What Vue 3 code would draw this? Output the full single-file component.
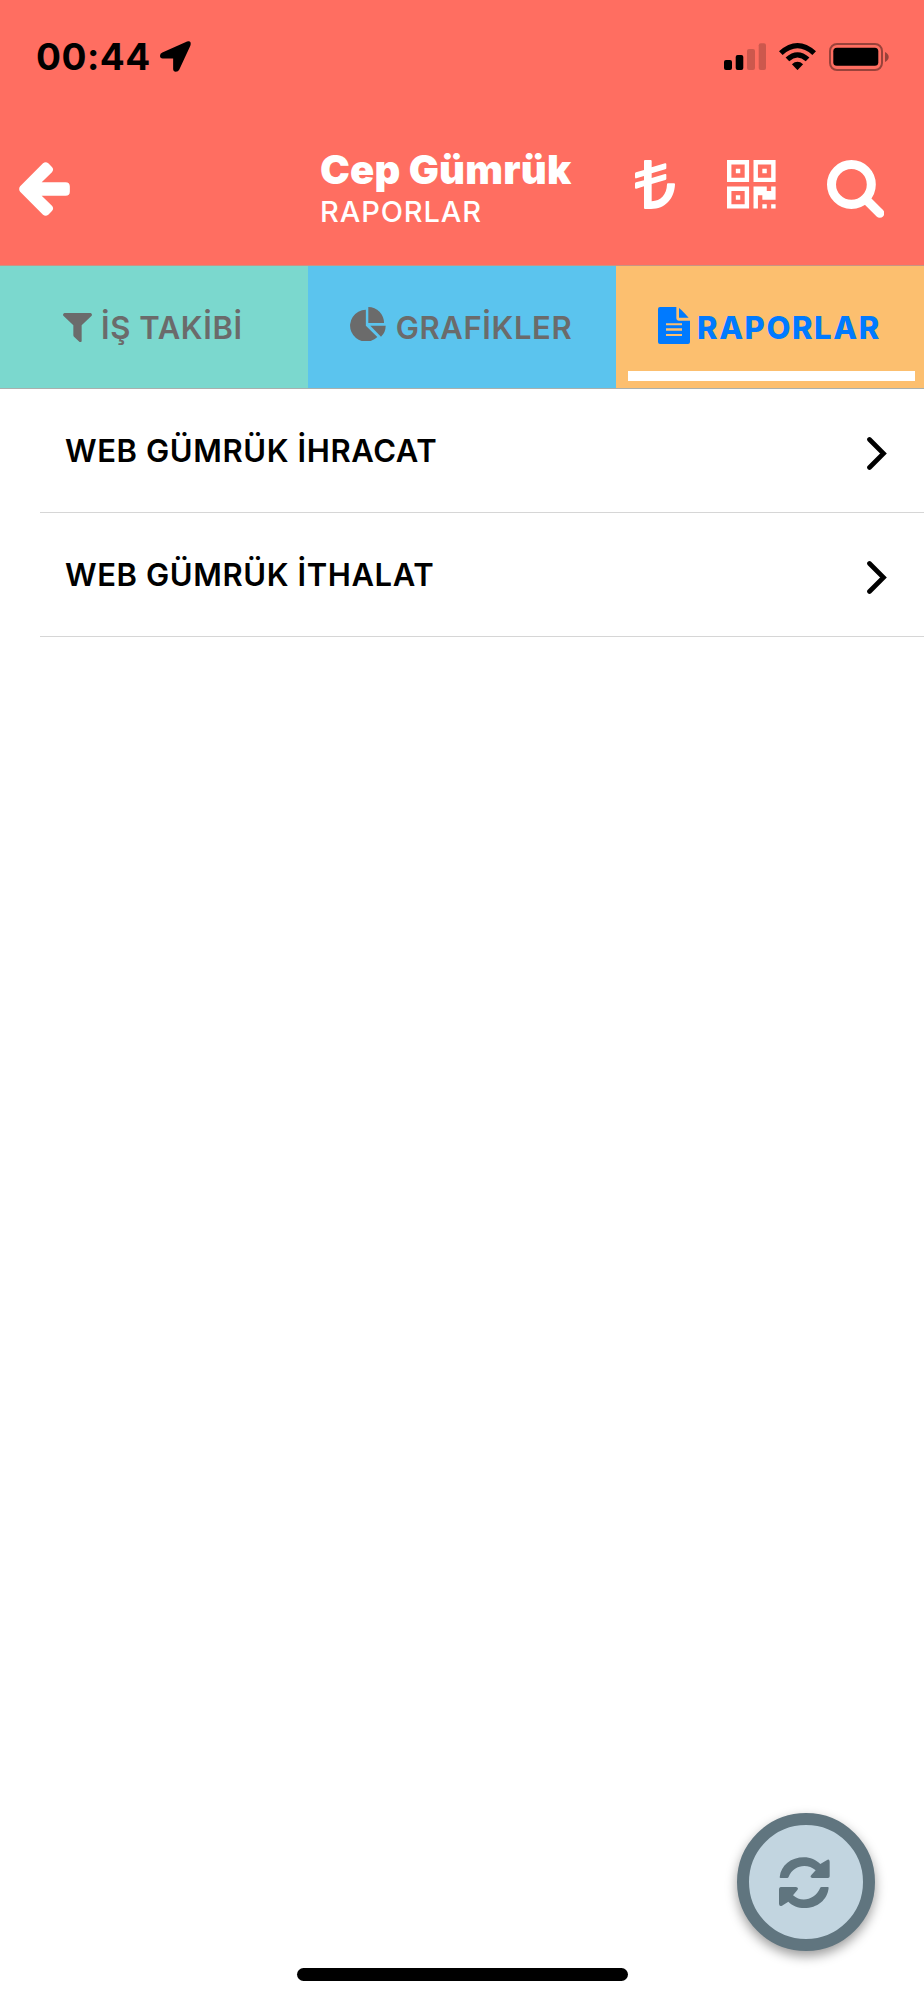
<template>
  <div class="phone">
    <header class="header">
      <!-- status bar -->
      <div class="status-bar">
        <span class="time">{{ time }}</span>
        <svg class="location" viewBox="0 0 92 92">
          <path d="M84 1 Q92 0 91 10 Q91 13 89 16 L57 85 Q54 91 47 91 Q39 91 39 82 V52 H8 Q0 52 0 44 Q0 37 7 34 L77 3 Q80 1 84 1Z" />
        </svg>
        <div class="status-icons">
          <svg class="signal" viewBox="0 0 42 27">
            <rect x="0" y="17" width="8" height="10" rx="2" />
            <rect x="11.7" y="12" width="7.6" height="15" rx="2" />
            <rect class="dim" x="23" y="6" width="8" height="21" rx="2" />
            <rect class="dim" x="34.7" y="0.3" width="7.3" height="26.7" rx="2" />
          </svg>
          <svg class="wifi" viewBox="0 0 112 83">
            <path d="M0 25 Q56 -25 112 25 L101 36 Q56 -4 11 36Z" />
            <path d="M20 44 Q56 11 92 44 L81 55 Q56 33 31 55Z" />
            <path d="M39 64 Q56 50 73 64 L56 82Z" />
          </svg>
          <svg class="battery" viewBox="0 0 60 28">
            <rect class="battery-frame" x="1" y="1" width="52" height="26" rx="7" />
            <rect x="4.3" y="4.7" width="45" height="18" rx="3.5" />
            <path class="battery-cap" d="M56 9 Q59.7 11 59.7 14 Q59.7 17 56 19Z" />
          </svg>
        </div>
      </div>

      <!-- toolbar -->
      <div class="toolbar">
        <button class="icon-button back">
          <svg viewBox="0 0 153 163">
            <path d="M3 73 L72 4 Q80 -3 88 4 L99 15 Q106 23 99 31 L68 61 H140 Q153 61 153 74 V89 Q153 102 140 102 H68 L99 132 Q106 140 99 148 L88 159 Q80 166 72 159 L3 90 Q-3 81 3 73Z" />
          </svg>
        </button>
        <div class="titles">
          <h1>{{ title }}</h1>
          <p>{{ subtitle }}</p>
        </div>
        <button class="icon-button lira">
          <svg viewBox="104 90 120 147">
            <path d="M131 93q0-3 3-3h17q3 0 3 3V112L194 100q4-1 4 3V115q0 2-3 3L154 130V144L194 132q4-1 4 2v12q0 3-3 4L154 162V214C182 213 199 194 200 163q0-3 3-3h18q3 0 3 3C222 207 195 237 152 237H134q-3 0-3-3V169L108 176q-4 1-4-3v-12q0-3 3-4L131 151V138L108 145q-4 1-4-3v-11q0-3 3-4L131 120Z" />
          </svg>
        </button>
        <button class="icon-button qr">
          <svg viewBox="0 0 11 11">
            <path fill-rule="evenodd" d="M0 0h5v5H0zM1 1v3h3V1zM2 2h1v1H2zM6 0h5v5H6zM7 1v3h3V1zM8 2h1v1H8zM0 6h5v5H0zM1 7v3h3V7zM2 8h1v1H2zM6 6h3v1h1V6h1v3H8V8H7v3H6zM8 10h1v1H8zM10 10h1v1h-1z" />
          </svg>
        </button>
        <button class="icon-button search">
          <svg viewBox="0 0 172 173">
            <circle cx="73" cy="73" r="59.5" />
            <path d="M122 123 L158 159" />
          </svg>
        </button>
      </div>
    </header>

    <!-- tabs -->
    <nav class="tabs">
      <button
        v-for="tab in tabs"
        :key="tab.id"
        :class="['tab', tab.id, { active: tab.id === activeTab }]"
        @click="activeTab = tab.id"
      >
        <svg v-if="tab.id === 'tracking'" class="tab-icon" viewBox="0 0 87 88">
          <path d="M4 0H83Q89 3 86 8L56 37V84Q54 90 49 86L33 71Q31 69 31 66V37L1 8Q-2 3 4 0Z" />
        </svg>
        <svg v-else-if="tab.id === 'charts'" class="tab-icon" viewBox="0 0 107 103">
          <path d="M47.500 56 L82 90 A48 48 0 1 1 47.500 8Z" />
          <path d="M55 0 A47 47 0 0 1 102 48 H55Z" />
          <path d="M61 56 H107 Q107 76 93 89Z" />
        </svg>
        <svg v-else class="tab-icon" viewBox="0 0 96 111">
          <path fill-rule="evenodd" d="M6 0H55V34Q55 41 62 41H96V105Q96 111 90 111H6Q0 111 0 105V6Q0 0 6 0ZM24 49V55H72V49ZM24 64V71H72V64ZM24 81V87H72V81Z" />
          <path d="M63 3 Q66 4 92 32 H63Z" />
        </svg>
        <span class="tab-label">{{ tab.label }}</span>
      </button>
    </nav>

    <!-- report list -->
    <ul class="list">
      <li v-for="report in reports" :key="report" class="list-item">
        <span class="report-name">{{ report }}</span>
        <svg class="chevron" viewBox="0 0 20 33">
          <path d="M2.500 2.500 L16.500 16.500 L2.500 30.500" />
        </svg>
      </li>
    </ul>

    <footer class="footer">
      <button class="refresh">
        <svg viewBox="0 0 152 153">
          <path d="M2 61 C6 24 36 1 75 1 C94 1 111 9 124 21 L143 10 Q151 4 152 14 V58 Q152 63 147 63 H100 Q91 61 97 54 L110 40 C85 17 43 24 29 59 Q28 63 24 63 H5 Q2 63 2 61Z" />
          <path d="M149 92 C145 129 115 153 76 153 C57 153 40 146 28 134 L9 146 Q1 150 0 141 V96 Q0 91 5 90 H51 Q60 92 55 99 L42 115 C67 138 109 128 123 94 Q124 90 128 90 H146 Q149 90 149 92Z" />
        </svg>
      </button>
      <div class="home-indicator"></div>
    </footer>
  </div>
</template>

<script setup>
import { ref } from 'vue'

const time = '00:44'
const title = 'Cep Gümrük'
const subtitle = 'RAPORLAR'

const activeTab = ref('reports')

const tabs = [
  { id: 'tracking', label: 'İŞ TAKİBİ' },
  { id: 'charts', label: 'GRAFİKLER' },
  { id: 'reports', label: 'RAPORLAR' }
]

const reports = ref(['WEB GÜMRÜK İHRACAT', 'WEB GÜMRÜK İTHALAT'])
</script>

<style>
body {
  margin: 0;
  background-color: #fff;
}
</style>

<style scoped>
.phone {
  display: flex;
  flex-direction: column;
  width: 924px;
  height: 2000px;
  background-color: #fff;
  font-family: Inter, "Noto Sans", sans-serif;
  overflow: hidden;
}

button {
  border: none;
  padding: 0;
  background: none;
  font-family: inherit;
  cursor: pointer;
}

svg {
  display: block;
  flex-shrink: 0;
}

.header {
  height: 265px;
  background-color: #ff6e61;
  border-bottom: 1px solid #c99483;
}

.status-bar {
  display: flex;
  align-items: center;
  height: 113px;
  padding: 0 35px 0 36px;
  box-sizing: border-box;
}

.time {
  width: 124px;
  font-size: 37px;
  font-weight: 700;
  letter-spacing: 0.5px;
  white-space: nowrap;
}

.location {
  width: 31px;
  height: 31px;
}

.status-icons {
  display: flex;
  align-items: center;
  margin-left: auto;
}

.signal {
  width: 42px;
  height: 27px;
}

.dim {
  opacity: 0.2;
}

.wifi {
  width: 37px;
  height: 27.5px;
  margin-left: 13px;
}

.battery {
  width: 60px;
  height: 28px;
  margin-left: 13px;
}

.battery-frame {
  fill: none;
  stroke: #000;
  stroke-width: 2;
  opacity: 0.4;
}

.battery-cap {
  opacity: 0.4;
}

.toolbar {
  display: flex;
  align-items: flex-start;
  height: 152px;
  padding: 1px 39px 0 19px;
  box-sizing: border-box;
}

.icon-button svg {
  fill: #fff;
}

.back {
  margin-top: 48px;
}

.back svg {
  width: 51px;
  height: 54px;
}

.titles {
  width: 315px;
  margin-left: 250px;
  padding-top: 31px;
  color: #fff;
  white-space: nowrap;
}

h1 {
  margin: 0;
  font-size: 40px;
  font-weight: 900;
  line-height: 50px;
  letter-spacing: 0.2px;
}

p {
  margin: 0;
  font-size: 29px;
  font-weight: 500;
  line-height: 34px;
  letter-spacing: 0.9px;
}

.lira {
  margin-top: 46px;
}

.lira svg {
  width: 40px;
  height: 49px;
}

.qr {
  margin-top: 46px;
  margin-left: 52px;
}

.qr svg {
  width: 48.6px;
  height: 48.6px;
}

.search {
  margin-top: 46px;
  margin-left: 51px;
}

.search svg {
  width: 57.5px;
  height: 58px;
}

.search circle,
.search path {
  fill: none;
  stroke: #fff;
  stroke-width: 27;
  stroke-linecap: round;
}

.tabs {
  display: flex;
  height: 122px;
  border-bottom: 1px solid #a9b0ae;
}

.tab {
  display: flex;
  position: relative;
  width: 308px;
  box-sizing: border-box;
  padding-top: 41px;
  color: #6b6b6b;
  font-size: 31px;
  font-weight: 600;
  letter-spacing: 0.6px;
}

.tab-icon {
  fill: currentColor;
}

.tab-label {
  line-height: 42px;
  white-space: nowrap;
}

.tracking {
  padding-left: 63px;
  background-color: #7bd8ce;
}

.tracking .tab-icon {
  width: 29px;
  height: 29.3px;
  margin: 6px 9px 0 0;
}

.charts {
  padding-left: 42px;
  background-color: #5bc4ee;
}

.charts .tab-icon {
  width: 35.7px;
  height: 34.3px;
  margin: 0 10px 0 0;
}

.reports {
  padding-left: 42px;
  background-color: #fcbf6f;
}

.reports .tab-icon {
  width: 32px;
  height: 37px;
  margin: 0 7px 0 0;
}

.active {
  color: #007aff;
  font-weight: 800;
  letter-spacing: 1.6px;
}

.active::after {
  content: "";
  position: absolute;
  right: 9px;
  bottom: 7px;
  left: 12px;
  height: 10px;
  background-color: #fff;
}

.list {
  margin: 0;
  padding: 0 0 0 40px;
  list-style: none;
}

.list-item {
  display: flex;
  align-items: center;
  height: 123px;
  padding: 0 37px 0 25px;
  border-bottom: 1px solid #d6d6d6;
}

.report-name {
  font-size: 31px;
  font-weight: 600;
  letter-spacing: 0.6px;
  white-space: nowrap;
}

.chevron {
  width: 20px;
  height: 33px;
  margin: 5px 0 0 auto;
  fill: none;
  stroke: #000;
  stroke-width: 4.7;
  stroke-linecap: round;
  stroke-linejoin: miter;
}

.footer {
  display: flex;
  flex-direction: column;
  align-items: center;
  margin-top: auto;
  padding-bottom: 19.5px;
}

.refresh {
  display: flex;
  align-items: center;
  justify-content: center;
  align-self: flex-end;
  width: 138px;
  height: 138px;
  margin: 0 49px 17px 0;
  box-sizing: border-box;
  border: 12px solid #60757f;
  border-radius: 50%;
  background-color: #c2d5e0;
  box-shadow: 0 5px 12px rgba(0, 0, 0, 0.4);
}

.refresh svg {
  width: 50.7px;
  height: 51px;
  margin-right: 3px;
  fill: #60757f;
}

.home-indicator {
  width: 331px;
  height: 12.5px;
  border-radius: 7px;
  background-color: #000;
}
</style>
